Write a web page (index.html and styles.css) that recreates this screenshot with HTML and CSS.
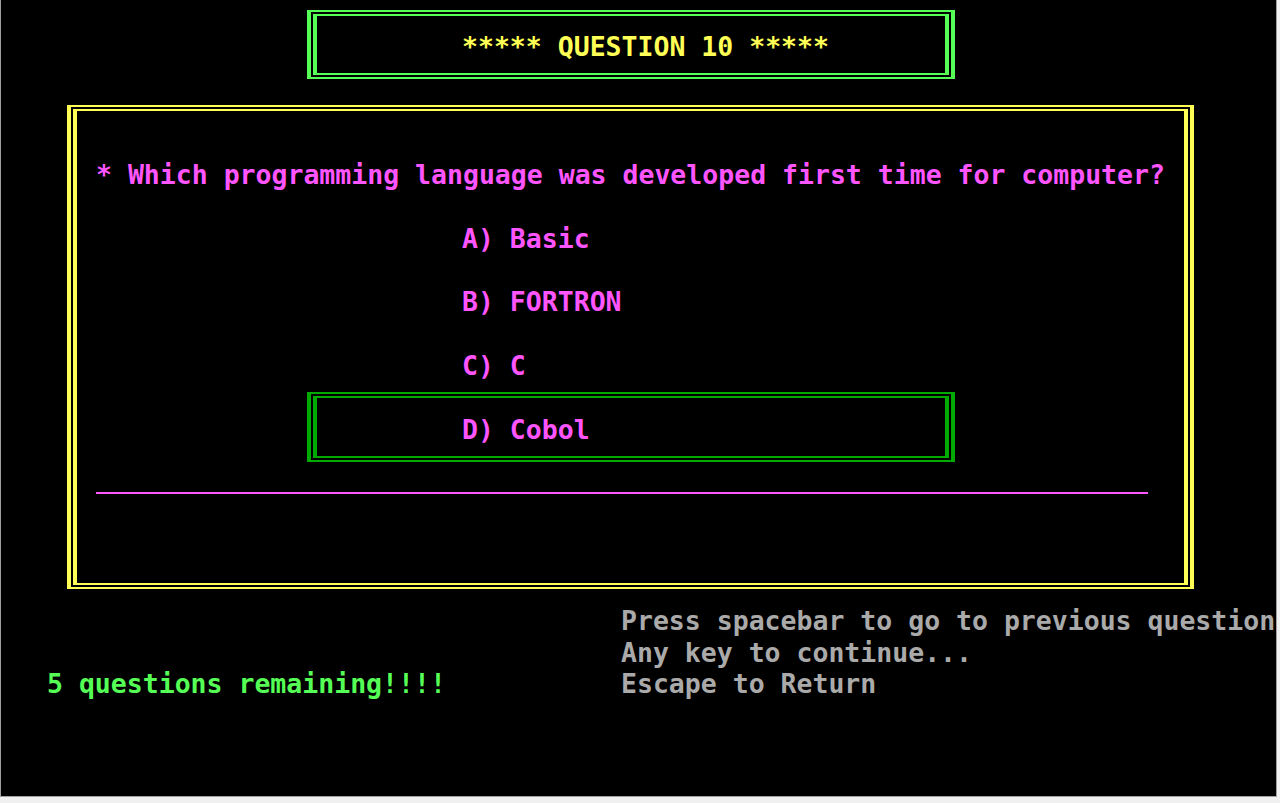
FILE: index.html
```html
<!DOCTYPE html>
<html lang="en">
<head>
<meta charset="utf-8">
<title>Quiz - Question 10</title>
<link rel="stylesheet" href="styles.css">
</head>
<body>
<div class="screen">
  <header class="frame frame-title">
    <div class="frame-inner">
      <h1 class="title">***** QUESTION 10 *****</h1>
    </div>
  </header>

  <section class="quiz">
    <div class="quiz-inner">
      <p class="question">* Which programming language was developed first time for computer?</p>
      <ul class="options">
        <li class="option">A) Basic</li>
        <li class="option">B) FORTRON</li>
        <li class="option">C) C</li>
        <li class="option option-selected">
          <div class="frame frame-select">
            <div class="frame-inner">D) Cobol</div>
          </div>
        </li>
      </ul>
      <hr class="rule">
    </div>
  </section>

  <footer class="status">
    <div class="remaining">5 questions remaining!!!!</div>
    <div class="help">
      <div>Press spacebar to go to previous question</div>
      <div>Any key to continue...</div>
      <div>Escape to Return</div>
    </div>
  </footer>
</div>
</body>
</html>
```

FILE: styles.css
```css
* {
  box-sizing: border-box;
}

html, body {
  margin: 0;
  padding: 0;
  background: #f0f0f0;
}

body {
  width: 1280px;
  height: 803px;
  overflow: hidden;
  font-family: "DejaVu Sans Mono", "Liberation Mono", monospace;
  font-weight: bold;
  font-size: 26.5px;
  line-height: 31.84px;
}

.screen {
  width: 1277px;
  height: 797px;
  background: #000;
  border-left: 1px solid #a0a0a0;
  border-right: 1px solid #a0a0a0;
  border-bottom: 1px solid #a0a0a0;
  overflow: hidden;
  display: flex;
  flex-direction: column;
}

/* double-line frames */
.frame {
  border-style: solid;
  border-width: 2px 4px;
  padding: 2px;
}

.frame-inner {
  height: 100%;
  border-style: solid;
  border-width: 2px 4px;
  border-color: inherit;
  padding-left: 145px;
  white-space: nowrap;
}

.frame-title {
  margin: 10px 0 0 306px;
  width: 648px;
  height: 69px;
  border-color: #55ff55;
}

.frame-title .frame-inner {
  padding-top: 15.4px;
}

.title {
  margin: 0;
  font: inherit;
  color: #ffff55;
}

/* question box */
.quiz {
  margin: 26px 0 0 66px;
  width: 1127px;
  height: 484px;
  border: solid #ffff55;
  border-width: 2px 4px;
  padding: 2px;
}

.quiz-inner {
  height: 100%;
  border: solid #ffff55;
  border-width: 2px 4px;
  color: #ff55ff;
  overflow: hidden;
}

.question {
  margin: 48px 0 0 19px;
  white-space: nowrap;
}

.options {
  list-style: none;
  margin: 0;
  padding: 0;
}

.option {
  margin: 31.84px 0 0 385px;
  white-space: nowrap;
}

.option-selected {
  margin: 10.2px 0 0 230px;
}

.frame-select {
  width: 648px;
  height: 70px;
  border-color: #00aa00;
}

.frame-select .frame-inner {
  padding-top: 15.6px;
}

.rule {
  margin: 30px 0 0 19px;
  width: 1052px;
  height: 2px;
  border: 0;
  background: #ff55ff;
}

/* status area */
.status {
  margin-top: 15.8px;
  padding-left: 46px;
  display: grid;
  grid-template-columns: 574px auto;
  white-space: nowrap;
}

.remaining {
  align-self: end;
  color: #55ff55;
}

.help {
  color: #aaaaaa;
}
```
